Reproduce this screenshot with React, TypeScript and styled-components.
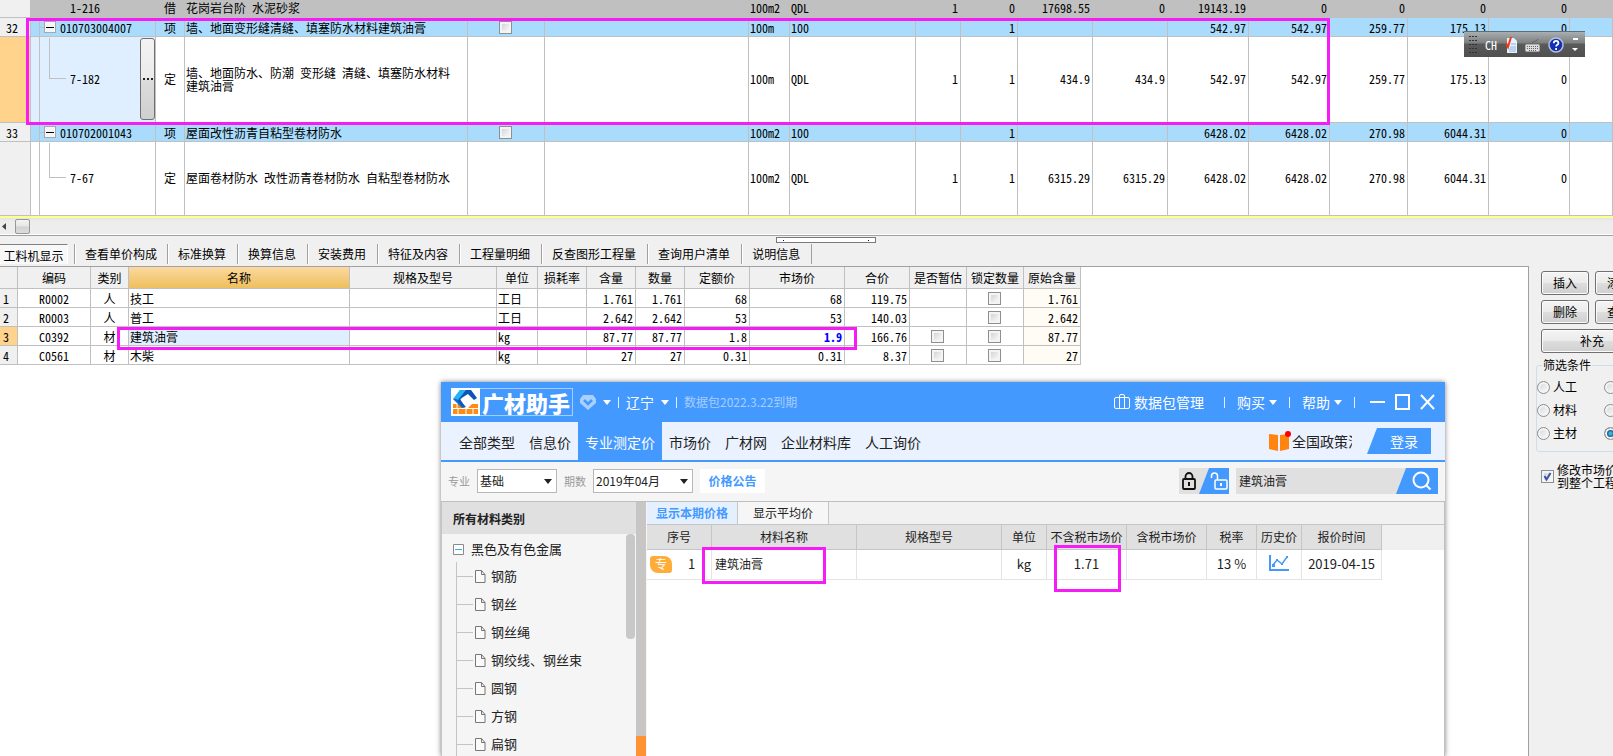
import React from "react";
import styled, { createGlobalStyle, css } from "styled-components";

const GRID_FONT = `"Noto Sans Mono CJK SC", "Noto Sans CJK SC", sans-serif`;
const UI_FONT = `"Noto Sans CJK SC", sans-serif`;
const LINE = "#c0c0c0";
const MARK = "#f51cf5";
const BLUE = "#4499ff";

const GlobalStyle = createGlobalStyle`
  *, *::before, *::after { box-sizing: border-box; }
  body { margin: 0; background: #f0f0f0; color: #000; font: 12px/14px ${GRID_FONT}; }
  button, input, select { font: inherit; color: inherit; margin: 0; }
  table { border-collapse: separate; border-spacing: 0; table-layout: fixed; }
  button { padding: 0; }
`;

const Page = styled.main`
  position: relative;
  display: flex;
  flex-direction: column;
  height: 100vh;
  overflow: hidden;
`;

/* ---------- shared bits ---------- */

const Mark = styled.div<{ $x: number; $y: number; $w: number; $h: number }>`
  position: absolute;
  left: ${(p) => p.$x}px;
  top: ${(p) => p.$y}px;
  width: ${(p) => p.$w}px;
  height: ${(p) => p.$h}px;
  border: 3px solid ${MARK};
  pointer-events: none;
`;

const Check = styled.input.attrs({ type: "checkbox" })`
  appearance: none;
  display: block;
  flex: none;
  width: 13px;
  height: 13px;
  margin: 0 auto;
  border: 1px solid #8e8f8f;
  background: linear-gradient(135deg, #c8ccd4, #f6f6f6 80%);
  box-shadow: inset 0 0 0 2px #f4f4f4;
`;

const Radio = styled.input.attrs({ type: "radio" })`
  appearance: none;
  flex: none;
  width: 13px;
  height: 13px;
  border: 1px solid #8e8f8f;
  border-radius: 50%;
  background: linear-gradient(135deg, #d0d4da, #f6f6f6 80%);
  box-shadow: inset 0 0 0 2px #f4f4f4;
  &:checked {
    background: radial-gradient(circle, #3fb4e8 0 1px, #0d4268 4px);
  }
`;

/* ---------- upper bill grid ---------- */

type Tone = "plain" | "item" | "locked";

const BillTable = styled.table`
  width: 100%;
  flex: none;
  background: #fff;
`;

const cell = css`
  padding: 0 2px;
  border-right: 1px solid ${LINE};
  border-bottom: 1px solid ${LINE};
  line-height: 13px;
  white-space: nowrap;
  overflow: hidden;
`;

const Cell = styled.td<{ $align?: string; $picked?: boolean; $tint?: string }>`
  ${cell}
  text-align: ${(p) => p.$align || "left"};
  ${(p) => !p.$align && "padding-left: 1px;"}
  ${(p) => p.$tint && `background: ${p.$tint};`}
  ${(p) => p.$picked && "background: #e0efff;"}
`;

const TreeTd = styled(Cell)`
  padding: 0;
`;

const BillRow = styled.tr<{ $tone: Tone; $h: number }>`
  height: ${(p) => p.$h}px;
  background: ${(p) => ({ plain: "#fff", item: "#a9dcfc", locked: LINE })[p.$tone]};
  > td { padding-bottom: ${(p) => ({ plain: 2, item: 0, locked: 3 })[p.$tone]}px; }
`;

const RowHead = styled.th<{ $active?: boolean; $pad: number }>`
  ${cell}
  padding-left: ${(p) => p.$pad}px;
  font-weight: 400;
  text-align: left;
  background: ${(p) => (p.$active ? "#ffd38c" : "#f0f0f0")};
`;

const TreeCell = styled.div<{ $h: number }>`
  display: flex;
  align-items: center;
  height: ${(p) => p.$h}px;
`;

const Stub = styled.span`
  width: 4px;
  border-top: 1px solid ${LINE};
`;

const Expander = styled.button`
  flex: none;
  width: 12px;
  height: 12px;
  margin-right: 4px;
  border: 1px solid #a8a8a8;
  background: linear-gradient(#000, #000) center / 8px 1px no-repeat, #f6f6f6;
`;

const Elbow = styled.span`
  align-self: flex-start;
  flex: none;
  width: 17px;
  height: 50%;
  margin: 0 4px 0 9px;
  border-left: 1px solid ${LINE};
  border-bottom: 1px solid ${LINE};
`;

const CodeText = styled.span<{ $indent?: boolean }>`
  flex: 1;
  ${(p) => p.$indent && "padding-left: 30px;"}
`;

const MoreButton = styled.button`
  flex: none;
  width: 15px;
  height: 82px;
  border: 1px solid #707070;
  border-radius: 3px;
  background: linear-gradient(#f3f3f3, #ebebeb 48%, #dcdcdc 52%, #cfcfcf);
  > svg { display: block; margin: auto; }
`;

const MoreDots = () => (
  <svg width="11" height="2" viewBox="0 0 11 2" aria-hidden="true">
    <path d="M1 0h2v2H1zM5 0h2v2H5zM9 0h2v2H9z" fill="#222" />
  </svg>
);

const billWidths = [31, 9, 116, 29, 283, 77, 204, 41, 126, 45, 57, 75, 75, 81, 81, 78, 81, 81];

interface Bill {
  no: string;
  code: string;
  kind: string;
  name: React.ReactNode;
  unit: string;
  expr: string;
  values: string[];
  tone: Tone;
  h: number;
  leaf?: boolean;
  active?: boolean;
}

const bills: Bill[] = [
  { no: "", code: "1-216", kind: "借", name: "花岗岩台阶 水泥砂浆", unit: "100m2", expr: "QDL", values: ["1", "0", "17698.55", "0", "19143.19", "0", "0", "0", "0"], tone: "locked", h: 18 },
  { no: "32", code: "010703004007", kind: "项", name: "墙、地面变形缝清缝、填塞防水材料建筑油膏", unit: "100m", expr: "100", values: ["", "1", "", "", "542.97", "542.97", "259.77", "175.13", "0"], tone: "item", h: 19 },
  { no: "", code: "7-182", kind: "定", name: <>墙、地面防水、防潮 变形缝 清缝、填塞防水材料<br />建筑油膏</>, unit: "100m", expr: "QDL", values: ["1", "1", "434.9", "434.9", "542.97", "542.97", "259.77", "175.13", "0"], tone: "plain", h: 86, leaf: true, active: true },
  { no: "33", code: "010702001043", kind: "项", name: "屋面改性沥青自粘型卷材防水", unit: "100m2", expr: "100", values: ["", "1", "", "", "6428.02", "6428.02", "270.98", "6044.31", "0"], tone: "item", h: 19 },
  { no: "", code: "7-67", kind: "定", name: "屋面卷材防水 改性沥青卷材防水 自粘型卷材防水", unit: "100m2", expr: "QDL", values: ["1", "1", "6315.29", "6315.29", "6428.02", "6428.02", "270.98", "6044.31", "0"], tone: "plain", h: 74, leaf: true },
];

const BillGrid = () => (
  <BillTable>
    <colgroup>
      {billWidths.map((w, i) => <col key={i} width={w} />)}
      <col />
    </colgroup>
    <tbody>
      {bills.map((b) => (
        <BillRow key={b.code} $tone={b.tone} $h={b.h}>
          <RowHead $pad={6} $active={b.active}>{b.no}</RowHead>
          <Cell $picked={b.active} />
          <TreeTd $picked={b.active}>
            <TreeCell $h={b.tone === "item" ? b.h - 1 : b.h - 4}>
              {b.tone === "item" && <><Stub /><Expander aria-label="折叠" /></>}
              {b.leaf && <Elbow />}
              <CodeText $indent={b.tone === "locked"}>{b.code}</CodeText>
              {b.active && <MoreButton aria-label="更多"><MoreDots /></MoreButton>}
            </TreeCell>
          </TreeTd>
          <Cell $align="center">{b.kind}</Cell>
          <Cell>{b.name}</Cell>
          <Cell>{b.tone === "item" && <Check aria-label="选择" />}</Cell>
          <Cell />
          <Cell>{b.unit}</Cell>
          <Cell>{b.expr}</Cell>
          {b.values.map((v, i) => <Cell key={i} $align="right">{v}</Cell>)}
          <Cell />
        </BillRow>
      ))}
    </tbody>
  </BillTable>
);

const ScrollBar = styled.div`
  flex: none;
  display: flex;
  align-items: center;
  height: 19px;
  border-top: 2px solid #ffff8c;
  border-bottom: 1px solid #fff;
  background: linear-gradient(#e3e3e3, #ededed 4px);
`;

const ScrollArrow = styled.svg`
  margin: 0 9px 0 2px;
`;

const ScrollThumb = styled.div`
  width: 15px;
  height: 15px;
  border: 1px solid #979797;
  border-radius: 2px;
  background: linear-gradient(#f3f3f3, #e6e6e6 48%, #d2d2d5 52%, #dcdcdc);
`;

/* ---------- detail tabs ---------- */

const TabBar = styled.div`
  position: relative;
  flex: none;
  display: flex;
  align-items: flex-start;
  height: 31px;
  padding-top: 8px;
  border-top: 1px solid #a0a0a5;
`;

const FirstTab = styled.button`
  width: 68px;
  height: 20px;
  margin-right: 6px;
  padding-top: 2px;
  border: 0;
  border-top: 1px solid #808080;
  border-right: 1px solid #fff;
  background: #f8f8f8;
`;

const DetailTab = styled.button`
  height: 20px;
  padding: 0 10px;
  border: 0;
  border-left: 1px solid #a0a0a0;
  box-shadow: inset 1px 0 0 #fff;
  background: none;
  &:last-of-type { border-right: 1px solid #a0a0a0; }
  & + & { padding-right: 11px; }
`;

const Splitter = styled.div`
  position: absolute;
  left: 776px;
  top: 1px;
  display: flex;
  justify-content: space-between;
  align-items: center;
  width: 100px;
  height: 6px;
  padding: 0 6px;
  border: 1px solid #7a7a7a;
  background: #fff;
`;

const SplitDot = styled.span`
  width: 1px;
  height: 1px;
  background: #000080;
`;

const detailTabs = ["查看单价构成", "标准换算", "换算信息", "安装费用", "特征及内容", "工程量明细", "反查图形工程量", "查询用户清单", "说明信息"];

/* ---------- lower area ---------- */

const Lower = styled.div`
  flex: 1;
  display: flex;
  min-height: 0;
`;

const ResourcePane = styled.section`
  flex: 1;
  min-width: 0;
  overflow: hidden;
  border-top: 1px solid #a0a0a5;
  border-right: 1px solid #a0a0a5;
  background: #fff;
`;

const ResourceTable = styled.table`
  width: 1081px;
`;

const HeadCell = styled.th<{ $hot?: boolean }>`
  ${cell}
  padding: 0;
  height: 22px;
  font-weight: 400;
  background: ${(p) => (p.$hot ? "linear-gradient(#fbd9a0, #efbf5c)" : "#f0f0f0")};
`;

const ResRow = styled.tr`
  height: 19px;
`;

const Strong = styled.strong`
  color: #0000ff;
`;

const resWidths = [18, 73, 38, 221, 147, 41, 49, 49, 49, 65, 95, 65, 57, 57, 57];
const resHeads = ["", "编码", "类别", "名称", "规格及型号", "单位", "损耗率", "含量", "数量", "定额价", "市场价", "合价", "是否暂估", "锁定数量", "原始含量"];
const resources = [
  { code: "R0002", kind: "人", name: "技工", unit: "工日", qty: "1.761", quota: "68", market: "68", total: "119.75" },
  { code: "R0003", kind: "人", name: "普工", unit: "工日", qty: "2.642", quota: "53", market: "53", total: "140.03" },
  { code: "C0392", kind: "材", name: "建筑油膏", unit: "kg", qty: "87.77", quota: "1.8", market: "1.9", total: "166.76", active: true },
  { code: "C0561", kind: "材", name: "木柴", unit: "kg", qty: "27", quota: "0.31", market: "0.31", total: "8.37" },
];

const ResourceGrid = () => (
  <ResourceTable>
    <colgroup>{resWidths.map((w, i) => <col key={i} width={w} />)}</colgroup>
    <thead>
      <tr>{resHeads.map((h) => <HeadCell key={h} $hot={h === "名称"}>{h}</HeadCell>)}</tr>
    </thead>
    <tbody>
      {resources.map((r, i) => (
        <ResRow key={r.code}>
          <RowHead $pad={3} $active={r.active}>{i + 1}</RowHead>
          <Cell $align="center">{r.code}</Cell>
          <Cell $align="center">{r.kind}</Cell>
          <Cell $picked={r.active}>{r.name}</Cell>
          <Cell />
          <Cell>{r.unit}</Cell>
          <Cell />
          <Cell $align="right">{r.qty}</Cell>
          <Cell $align="right">{r.qty}</Cell>
          <Cell $align="right">{r.quota}</Cell>
          <Cell $align="right">{r.active ? <Strong>{r.market}</Strong> : r.market}</Cell>
          <Cell $align="right">{r.total}</Cell>
          <Cell>{r.kind === "材" && <Check aria-label="是否暂估" />}</Cell>
          <Cell><Check aria-label="锁定数量" /></Cell>
          <Cell $align="right" $tint="#fffcf6">{r.qty}</Cell>
        </ResRow>
      ))}
    </tbody>
  </ResourceTable>
);

const SidePane = styled.aside`
  flex: none;
  width: 84px;
  overflow: hidden;
`;

const SideInner = styled.div`
  display: flex;
  flex-direction: column;
  gap: 5px;
  width: 120px;
  padding: 5px 6px 0 12px;
`;

const ButtonRow = styled.div`
  display: flex;
  gap: 6px;
`;

const PushButton = styled.button<{ $w: number }>`
  flex: none;
  width: ${(p) => p.$w}px;
  height: 24px;
  border: 1px solid #707070;
  border-radius: 3px;
  background: linear-gradient(#f4f4f4, #ebebeb 48%, #dddddd 52%, #cfcfcf);
  box-shadow: inset 0 0 0 1px #fbfbfb;
`;

const Filter = styled.fieldset`
  min-width: 0;
  margin: 0 0 0 -5px;
  padding: 8px 0 11px;
  border: 1px solid #d0dde9;
  border-radius: 3px;
`;

const Legend = styled.legend`
  margin-left: 5px;
  padding: 0 1px;
`;

const RadioGrid = styled.div`
  display: grid;
  grid-template-columns: 67px 67px;
  row-gap: 9px;
`;

const RadioLabel = styled.label`
  display: flex;
  align-items: center;
  gap: 3px;
  height: 14px;
  white-space: nowrap;
`;

const SyncLabel = styled.label`
  display: flex;
  align-items: center;
  gap: 3px;
  margin-top: 6px;
  line-height: 13px;
  white-space: nowrap;
`;

const TickBox = styled.span`
  display: grid;
  > * { grid-area: 1 / 1; }
`;

const Tick = styled.svg`
  pointer-events: none;
`;

const radios: [string, boolean?][] = [["人工"], ["机械"], ["材料"], ["设备"], ["主材"], ["所有", true]];

const Side = () => (
  <SidePane>
    <SideInner>
      <ButtonRow><PushButton $w={48}>插入</PushButton><PushButton $w={48}>添加</PushButton></ButtonRow>
      <ButtonRow><PushButton $w={48}>删除</PushButton><PushButton $w={48}>查询</PushButton></ButtonRow>
      <PushButton $w={102}>补充</PushButton>
      <Filter>
        <Legend>筛选条件</Legend>
        <RadioGrid>
          {radios.map(([t, on]) => (
            <RadioLabel key={t}><Radio name="kind" defaultChecked={on} />{t}</RadioLabel>
          ))}
        </RadioGrid>
      </Filter>
      <SyncLabel>
        <TickBox>
          <Check defaultChecked />
          <Tick width="13" height="13" viewBox="0 0 13 13"><path d="M3.5 6l2 3.5L9.500 3" fill="none" stroke="#3a55a8" strokeWidth="2" /></Tick>
        </TickBox>
        <span>修改市场价同步<br />到整个工程</span>
      </SyncLabel>
    </SideInner>
  </SidePane>
);

/* ---------- language bar ---------- */

const LangBar = styled.div`
  position: absolute;
  left: 1464px;
  top: 31px;
  display: flex;
  align-items: center;
  gap: 8px;
  width: 121px;
  height: 26px;
  padding: 0 5px;
  border-top: 1px solid #56707f;
  background: linear-gradient(#a9aeae, #7d7f7f 44%, #5a5a5a 48%, #505050);
  color: #fff;
`;

const LangIcon = styled.svg`
  flex: none;
`;

const LanguageBar = () => (
  <LangBar>
    <LangIcon width="8" height="18" viewBox="0 0 8 18">
      {[0, 4, 8, 12, 16].map((y) => <path key={y} d={`M0 ${y}h2v1H0zM3 ${y}h2v1H3zM6 ${y}h2v1H6z`} fill="#333" />)}
    </LangIcon>
    <span>CH</span>
    <LangIcon width="12" height="16" viewBox="0 0 12 16">
      <path d="M2 1h7l3 3v12H2z" fill="#e6f1fd" />
      <path d="M6 7h5M5 10h6M4 12h7M4 14h7" stroke="#8db4e2" />
      <path d="M1 6l2 4L6 0" fill="none" stroke="#f03a17" strokeWidth="2" />
    </LangIcon>
    <LangIcon width="15" height="16" viewBox="0 0 15 16">
      <path d="M7 7c0-4 4-1 6-5" fill="none" stroke="#5f6464" />
      <rect x="0.500" y="7.500" width="14" height="7" rx="1" fill="#ddd" stroke="#aaa" />
      <path d="M2 9.500h11M2 11.500h11M4 13.500h7" stroke="#666" strokeDasharray="1 1" />
    </LangIcon>
    <LangIcon width="16" height="16" viewBox="0 0 16 16">
      <circle cx="8" cy="8" r="7" fill="#1230b4" stroke="#b7c0dd" strokeWidth="1.500" />
      <path d="M5.800 6.200c0-3 4.600-3 4.600 0 0 1.700-2.300 1.600-2.300 3.400M8.100 11v2" fill="none" stroke="#fff" strokeWidth="1.800" />
    </LangIcon>
    <LangIcon width="6" height="14" viewBox="0 0 6 14">
      <path d="M1 0h5v2H1zM0 10h6l-3 3z" fill="#fff" />
    </LangIcon>
  </LangBar>
);

/* ---------- price assistant window ---------- */

const Win = styled.section`
  position: absolute;
  left: 441px;
  top: 382px;
  bottom: 0;
  display: flex;
  flex-direction: column;
  width: 1004px;
  background: #f5f5f5;
  box-shadow: 0 0 5px rgba(0, 0, 0, 0.5);
  font-family: ${UI_FONT};
  color: #222;
`;

const TitleBar = styled.header`
  flex: none;
  display: flex;
  align-items: center;
  gap: 7px;
  height: 40px;
  padding: 0 10px;
  background: ${BLUE};
  color: #fff;
  font-size: 14px;
`;

const Logo = styled.div`
  display: flex;
  align-items: center;
  width: 122px;
  height: 28px;
  border: 1px solid #a3ccff;
  border-left: 0;
`;

const LogoText = styled.span`
  flex: 1;
  font: 900 22px/26px ${UI_FONT};
  text-align: center;
`;

const Sep = styled.span`
  width: 1px;
  height: 11px;
  background: #e4f0ff;
`;

const Expiry = styled.span`
  font-size: 12px;
  color: #a6cfff;
`;

const TitleRight = styled.div`
  display: flex;
  align-items: center;
  gap: 12px;
  margin-left: auto;
`;

const FlatButton = styled.button<{ $wide?: boolean }>`
  display: flex;
  align-items: center;
  gap: 4px;
  border: 0;
  background: none;
  ${(p) => p.$wide && "margin-right: 8px;"}
`;

const Controls = styled.div`
  display: flex;
  gap: 10px;
  padding-left: 3px;
`;

const Caret = ({ color = "#fff" }: { color?: string }) => (
  <svg width="8" height="5" viewBox="0 0 8 5" aria-hidden="true"><path d="M0 0h8L4 5z" fill={color} /></svg>
);

const CaretButton = styled.button`
  display: flex;
  align-items: center;
  gap: 7px;
  border: 0;
  background: none;
`;

const Nav = styled.nav`
  flex: none;
  display: flex;
  align-items: center;
  height: 40px;
  padding: 0 14px 0 11px;
  border-bottom: 2px solid ${BLUE};
  background: #ebf2ff;
  font-size: 14px;
`;

const NavTab = styled.button<{ $on?: boolean }>`
  align-self: stretch;
  padding: 2px 7px 0;
  border: 0;
  background: ${(p) => (p.$on ? BLUE : "none")};
  color: ${(p) => (p.$on ? "#fff" : "#222")};
`;

const Policy = styled.a`
  display: flex;
  align-items: center;
  width: 83px;
  margin: 0 15px 0 auto;
  overflow: hidden;
  color: #222;
  text-decoration: none;
  white-space: nowrap;
`;

const PolicyIcon = styled.svg`
  flex: none;
  margin-right: 1px;
`;

const Login = styled.button`
  width: 64px;
  height: 26px;
  padding-left: 10px;
  border: 0;
  background: ${BLUE};
  clip-path: polygon(10px 0, 100% 0, 100% 100%, 0 100%);
  color: #fff;
`;

const FilterBar = styled.div`
  flex: none;
  display: flex;
  align-items: center;
  gap: 7px;
  height: 40px;
  padding: 0 7px 1px;
  border-bottom: 1px solid #bebebe;
`;

const FieldLabel = styled.label`
  font-size: 11px;
  color: #999;
`;

const SelectBox = styled.span<{ $w: number }>`
  display: grid;
  align-items: center;
  width: ${(p) => p.$w}px;
  > * { grid-area: 1 / 1; }
  > svg { justify-self: end; margin-right: 5px; pointer-events: none; }
`;

const Select = styled.select`
  appearance: none;
  width: 100%;
  height: 24px;
  padding: 0 2px;
  border: 1px solid #b8b8b8;
  border-radius: 0;
  background: #fff;
`;

const Notice = styled.button`
  width: 65px;
  height: 24px;
  border: 0;
  background: #fff;
  color: ${BLUE};
  font-weight: 700;
`;

const LockSwitch = styled.button`
  display: flex;
  width: 50px;
  height: 26px;
  margin-left: auto;
  border: 0;
  background: #e0e0e0;
`;

const Search = styled.div`
  display: flex;
  width: 202px;
  height: 26px;
  background: #e0e0e0;
`;

const SearchInput = styled.input`
  flex: 1;
  min-width: 0;
  padding: 0 3px;
  border: 0;
  background: none;
`;

const SearchButton = styled.button`
  display: flex;
  align-items: center;
  justify-content: flex-end;
  width: 42px;
  padding-right: 6px;
  border: 0;
  background: ${BLUE};
  clip-path: polygon(10px 0, 100% 0, 100% 100%, 0 100%);
`;

const Body = styled.div`
  flex: 1;
  display: flex;
  min-height: 0;
`;

const TreePane = styled.div`
  flex: none;
  display: flex;
  flex-direction: column;
  width: 195px;
  border-left: 1px solid #c4c4c4;
`;

const TreeTitle = styled.h2`
  flex: none;
  margin: 0;
  height: 32px;
  padding-left: 11px;
  background: #e0e0e0;
  font: 700 12px/34px ${UI_FONT};
`;

const TreeScroll = styled.div`
  flex: 1;
  display: flex;
  min-height: 0;
  overflow: hidden;
`;

const TreeList = styled.ul`
  flex: 1;
  margin: 0;
  padding: 0;
  list-style: none;
  font-size: 13px;
`;

const TreeRoot = styled.li`
  display: flex;
  align-items: center;
  gap: 7px;
  height: 28px;
  padding: 2px 0 0 11px;
`;

const TreeItem = styled.li`
  display: flex;
  align-items: center;
  height: 28px;
  padding-left: 14px;
`;

const Branch = styled.span`
  display: flex;
  align-items: center;
  width: 19px;
  height: 28px;
  border-left: 1px solid #c4c4c4;
  &::before { content: ""; width: 16px; height: 1px; background: #c4c4c4; }
`;

const LeafIcon = styled.svg`
  margin-right: 5px;
`;

const TreeThumb = styled.div`
  width: 9px;
  height: 105px;
  margin-right: 1px;
  border-radius: 4px;
  background: #c8c8c8;
`;

const Divider = styled.div`
  flex: none;
  display: flex;
  align-items: flex-end;
  width: 11px;
  border-right: 1px solid #f5f5f5;
  background: #c8c6c5;
`;

const DividerGrip = styled.span`
  width: 10px;
  height: 20px;
  background: #ff9232;
`;

const ResultPane = styled.div`
  flex: 1;
  min-width: 0;
  border-right: 1px solid #c0c0c0;
  background: #fff;
`;

const ResultTabs = styled.div`
  display: flex;
  height: 23px;
  border-bottom: 1px solid #c6c6c6;
  background: #f1f1f1;
`;

const ResultTab = styled.button<{ $on?: boolean }>`
  width: 91px;
  border: 0;
  border-right: 1px solid #c6c6c6;
  background: ${(p) => (p.$on ? "#e5f0ff" : "#f6f6f6")};
  color: ${(p) => (p.$on ? BLUE : "#222")};
  font-weight: ${(p) => (p.$on ? 700 : 400)};
`;

const PriceTable = styled.table`
  width: 100%;
`;

const PriceHead = styled.th`
  height: 25px;
  padding: 0;
  border-right: 1px solid #c6c6c6;
  border-bottom: 1px solid #c6c6c6;
  background: #e0e0e0;
  font-weight: 400;
  white-space: nowrap;
  &:last-child { border: 0; background: #f0f0f0; }
`;

const PriceCell = styled.td<{ $left?: boolean; $num?: boolean }>`
  height: 30px;
  padding: 0 3px 1px;
  border-right: 1px solid #e4e4e4;
  border-bottom: 1px solid #e4e4e4;
  font-size: ${(p) => (p.$num ? 13 : 12)}px;
  text-align: ${(p) => (p.$left ? "left" : "center")};
  white-space: nowrap;
  &:last-child { border: 0; }
`;

const SerialBox = styled.div`
  display: flex;
  align-items: center;
  gap: 16px;
`;

const Badge = styled.span`
  width: 22px;
  height: 17px;
  border-radius: 3px 8px 3px 8px;
  background: #ffac38;
  color: #fff;
  font-size: 12px;
  line-height: 16px;
  text-align: center;
`;

const navTabs = ["全部类型", "信息价", "专业测定价", "市场价", "广材网", "企业材料库", "人工询价"];
const treeItems = ["钢筋", "钢丝", "钢丝绳", "钢绞线、钢丝束", "圆钢", "方钢", "扁钢"];
const priceHeads = ["序号", "材料名称", "规格型号", "单位", "不含税市场价", "含税市场价", "税率", "历史价", "报价时间"];
const priceWidths = [65, 145, 145, 45, 80, 80, 50, 45, 80];

const Assistant = () => (
  <Win>
    <TitleBar>
      <Logo>
        <svg width="29" height="28" viewBox="0 0 29 28" aria-hidden="true">
          <path d="M0 0h29v28H0z" fill="#fff" />
          <path d="M2 16h9l3 4h3l4-4h6v10H2z" fill="#ff8a14" />
          <path d="M2 20.500h25M7 21v5M15 21v5M22 21v5M6 16v4" stroke="#fff" />
          <path d="M9 2h10l-6 5-6 8-5-4z" fill="#22b4f5" />
          <path d="M2 11l5-1 8 9-4 1-5-5z" fill="#1566d8" />
          <path d="M9 2h11l6 8-3 2-6-6-8 5 5 8-3-1-6-8z" fill="#0e54b8" />
          <path d="M9 2h6L7 12l-4-2z" fill="#22b4f5" />
        </svg>
        <LogoText>广材助手</LogoText>
      </Logo>
      <svg width="16" height="17" viewBox="0 0 16 17" aria-hidden="true">
        <path d="M3 1h10l3 4v4l-8 7-8-7V5z" fill="#a9d0ff" />
        <path d="M4 6l4 4 4-4" fill="none" stroke={BLUE} strokeWidth="2.500" />
      </svg>
      <Caret />
      <Sep />
      <CaretButton>辽宁<Caret /></CaretButton>
      <Sep />
      <Expiry>数据包2022.3.22到期</Expiry>
      <TitleRight>
        <FlatButton $wide>
          <svg width="16" height="16" viewBox="0 0 16 16" fill="none" stroke="#fff" aria-hidden="true">
            <rect x="0.500" y="3.500" width="15" height="11" rx="1.500" />
            <path d="M5.500 15V2q0-1.500 1.500-1.500h2q1.500 0 1.500 1.500v13" />
          </svg>
          数据包管理
        </FlatButton>
        <Sep />
        <FlatButton>购买<Caret /></FlatButton>
        <Sep />
        <FlatButton>帮助<Caret /></FlatButton>
        <Sep />
        <Controls>
          {["M0 8h15", "M1 1h13v14H1z", "M1 1l13 14M14 1L1 15"].map((d, i) => (
            <FlatButton key={d} aria-label={["最小化", "最大化", "关闭"][i]}>
              <svg width="15" height="16" viewBox="0 0 15 16"><path d={d} fill="none" stroke="#fff" strokeWidth="2" /></svg>
            </FlatButton>
          ))}
        </Controls>
      </TitleRight>
    </TitleBar>
    <Nav>
      {navTabs.map((t) => <NavTab key={t} $on={t === "专业测定价"}>{t}</NavTab>)}
      <Policy href="#policy">
        <PolicyIcon width="22" height="20" viewBox="0 0 22 20">
          <path d="M0 3l9 1v16l-9-2zM11 4l9-1v15l-9 2z" fill="#ff850f" />
          <circle cx="19" cy="3" r="3" fill="#f00" />
        </PolicyIcon>
        全国政策法规
      </Policy>
      <Login>登录</Login>
    </Nav>
    <FilterBar>
      <FieldLabel htmlFor="major">专业</FieldLabel>
      <SelectBox $w={80}><Select id="major"><option>基础</option></Select><Caret color="#222" /></SelectBox>
      <FieldLabel htmlFor="period">期数</FieldLabel>
      <SelectBox $w={100}><Select id="period"><option>2019年04月</option></Select><Caret color="#222" /></SelectBox>
      <Notice>价格公告</Notice>
      <LockSwitch aria-label="锁定">
        <svg width="50" height="26" viewBox="0 0 50 26" fill="none">
          <path d="M30 0h20v26H20z" fill={BLUE} />
          <path d="M6.500 11V8.500a3.500 3.500 0 0 1 7 0V11" stroke="#111" strokeWidth="1.800" />
          <rect x="4" y="11" width="12" height="10" rx="1" stroke="#111" strokeWidth="1.800" />
          <path d="M10 14v4" stroke="#111" strokeWidth="2" />
          <path d="M32.500 10V8a3 3 0 0 1 6 0v4" stroke="#fff" strokeWidth="1.500" />
          <rect x="36" y="12" width="12" height="9" rx="1" stroke="#fff" strokeWidth="1.500" />
          <path d="M42 15v3" stroke="#fff" strokeWidth="2" />
        </svg>
      </LockSwitch>
      <Search>
        <SearchInput aria-label="搜索材料" defaultValue="建筑油膏" />
        <SearchButton aria-label="搜索">
          <svg width="20" height="20" viewBox="0 0 20 20" fill="none" stroke="#fff" strokeWidth="2">
            <circle cx="9" cy="9" r="7.500" /><path d="M14.500 14.500l4 4" />
          </svg>
        </SearchButton>
      </Search>
    </FilterBar>
    <Body>
      <TreePane>
        <TreeTitle>所有材料类别</TreeTitle>
        <TreeScroll>
          <TreeList>
            <TreeRoot>
              <svg width="11" height="11" viewBox="0 0 11 11" aria-hidden="true">
                <path d="M0.500 0.500h10v10h-10z" fill="#fff" stroke="#8a8a8a" /><path d="M2 5.500h7" stroke="#2fb0e6" />
              </svg>
              黑色及有色金属
            </TreeRoot>
            {treeItems.map((t) => (
              <TreeItem key={t}>
                <Branch />
                <LeafIcon width="11" height="13" viewBox="0 0 11 13" aria-hidden="true">
                  <path d="M1 0.500h5.500l3.500 4v8H0.500v-12zM6.500 0.500v4H10" fill="#fafafa" stroke="#777" />
                </LeafIcon>
                {t}
              </TreeItem>
            ))}
          </TreeList>
          <TreeThumb />
        </TreeScroll>
      </TreePane>
      <Divider><DividerGrip /></Divider>
      <ResultPane>
        <ResultTabs>
          <ResultTab $on>显示本期价格</ResultTab>
          <ResultTab>显示平均价</ResultTab>
        </ResultTabs>
        <PriceTable>
          <colgroup>{priceWidths.map((w, i) => <col key={i} width={w} />)}<col /></colgroup>
          <thead><tr>{priceHeads.map((h) => <PriceHead key={h}>{h}</PriceHead>)}<PriceHead /></tr></thead>
          <tbody>
            <tr>
              <PriceCell $num><SerialBox><Badge>专</Badge>1</SerialBox></PriceCell>
              <PriceCell $left>建筑油膏</PriceCell>
              <PriceCell />
              <PriceCell $num>kg</PriceCell>
              <PriceCell $num>1.71</PriceCell>
              <PriceCell />
              <PriceCell $num>13 %</PriceCell>
              <PriceCell>
                <svg width="20" height="16" viewBox="0 0 20 16" fill="none" stroke={BLUE} role="img" aria-label="历史价">
                  <path d="M1 0v15h19" strokeWidth="2" />
                  <path d="M4 10l4-5 5 4 5-7" strokeWidth="1.500" />
                  <path d="M3 9h3v3H3zM7 4h2v2H7zM12 8h2v2h-2zM17 1h2v2h-2z" fill={BLUE} stroke="none" />
                </svg>
              </PriceCell>
              <PriceCell $num>2019-04-15</PriceCell>
              <PriceCell />
            </tr>
          </tbody>
        </PriceTable>
      </ResultPane>
    </Body>
    <Mark $x={261} $y={165} $w={124} $h={37} />
    <Mark $x={613} $y={163} $w={67} $h={47} />
  </Win>
);

export default function App() {
  return (
    <>
      <GlobalStyle />
      <Page>
        <BillGrid />
        <ScrollBar>
          <ScrollArrow width="4" height="7" viewBox="0 0 4 7" aria-hidden="true"><path d="M4 0v7L0 3.500z" fill="#444" /></ScrollArrow>
          <ScrollThumb />
        </ScrollBar>
        <TabBar>
          <FirstTab>工料机显示</FirstTab>
          {detailTabs.map((t) => <DetailTab key={t}>{t}</DetailTab>)}
          <Splitter><SplitDot /><SplitDot /></Splitter>
        </TabBar>
        <Lower>
          <ResourcePane><ResourceGrid /></ResourcePane>
          <Side />
        </Lower>
        <Mark $x={26} $y={18} $w={1304} $h={107} />
        <Mark $x={117} $y={327} $w={740} $h={23} />
        <LanguageBar />
        <Assistant />
      </Page>
    </>
  );
}
